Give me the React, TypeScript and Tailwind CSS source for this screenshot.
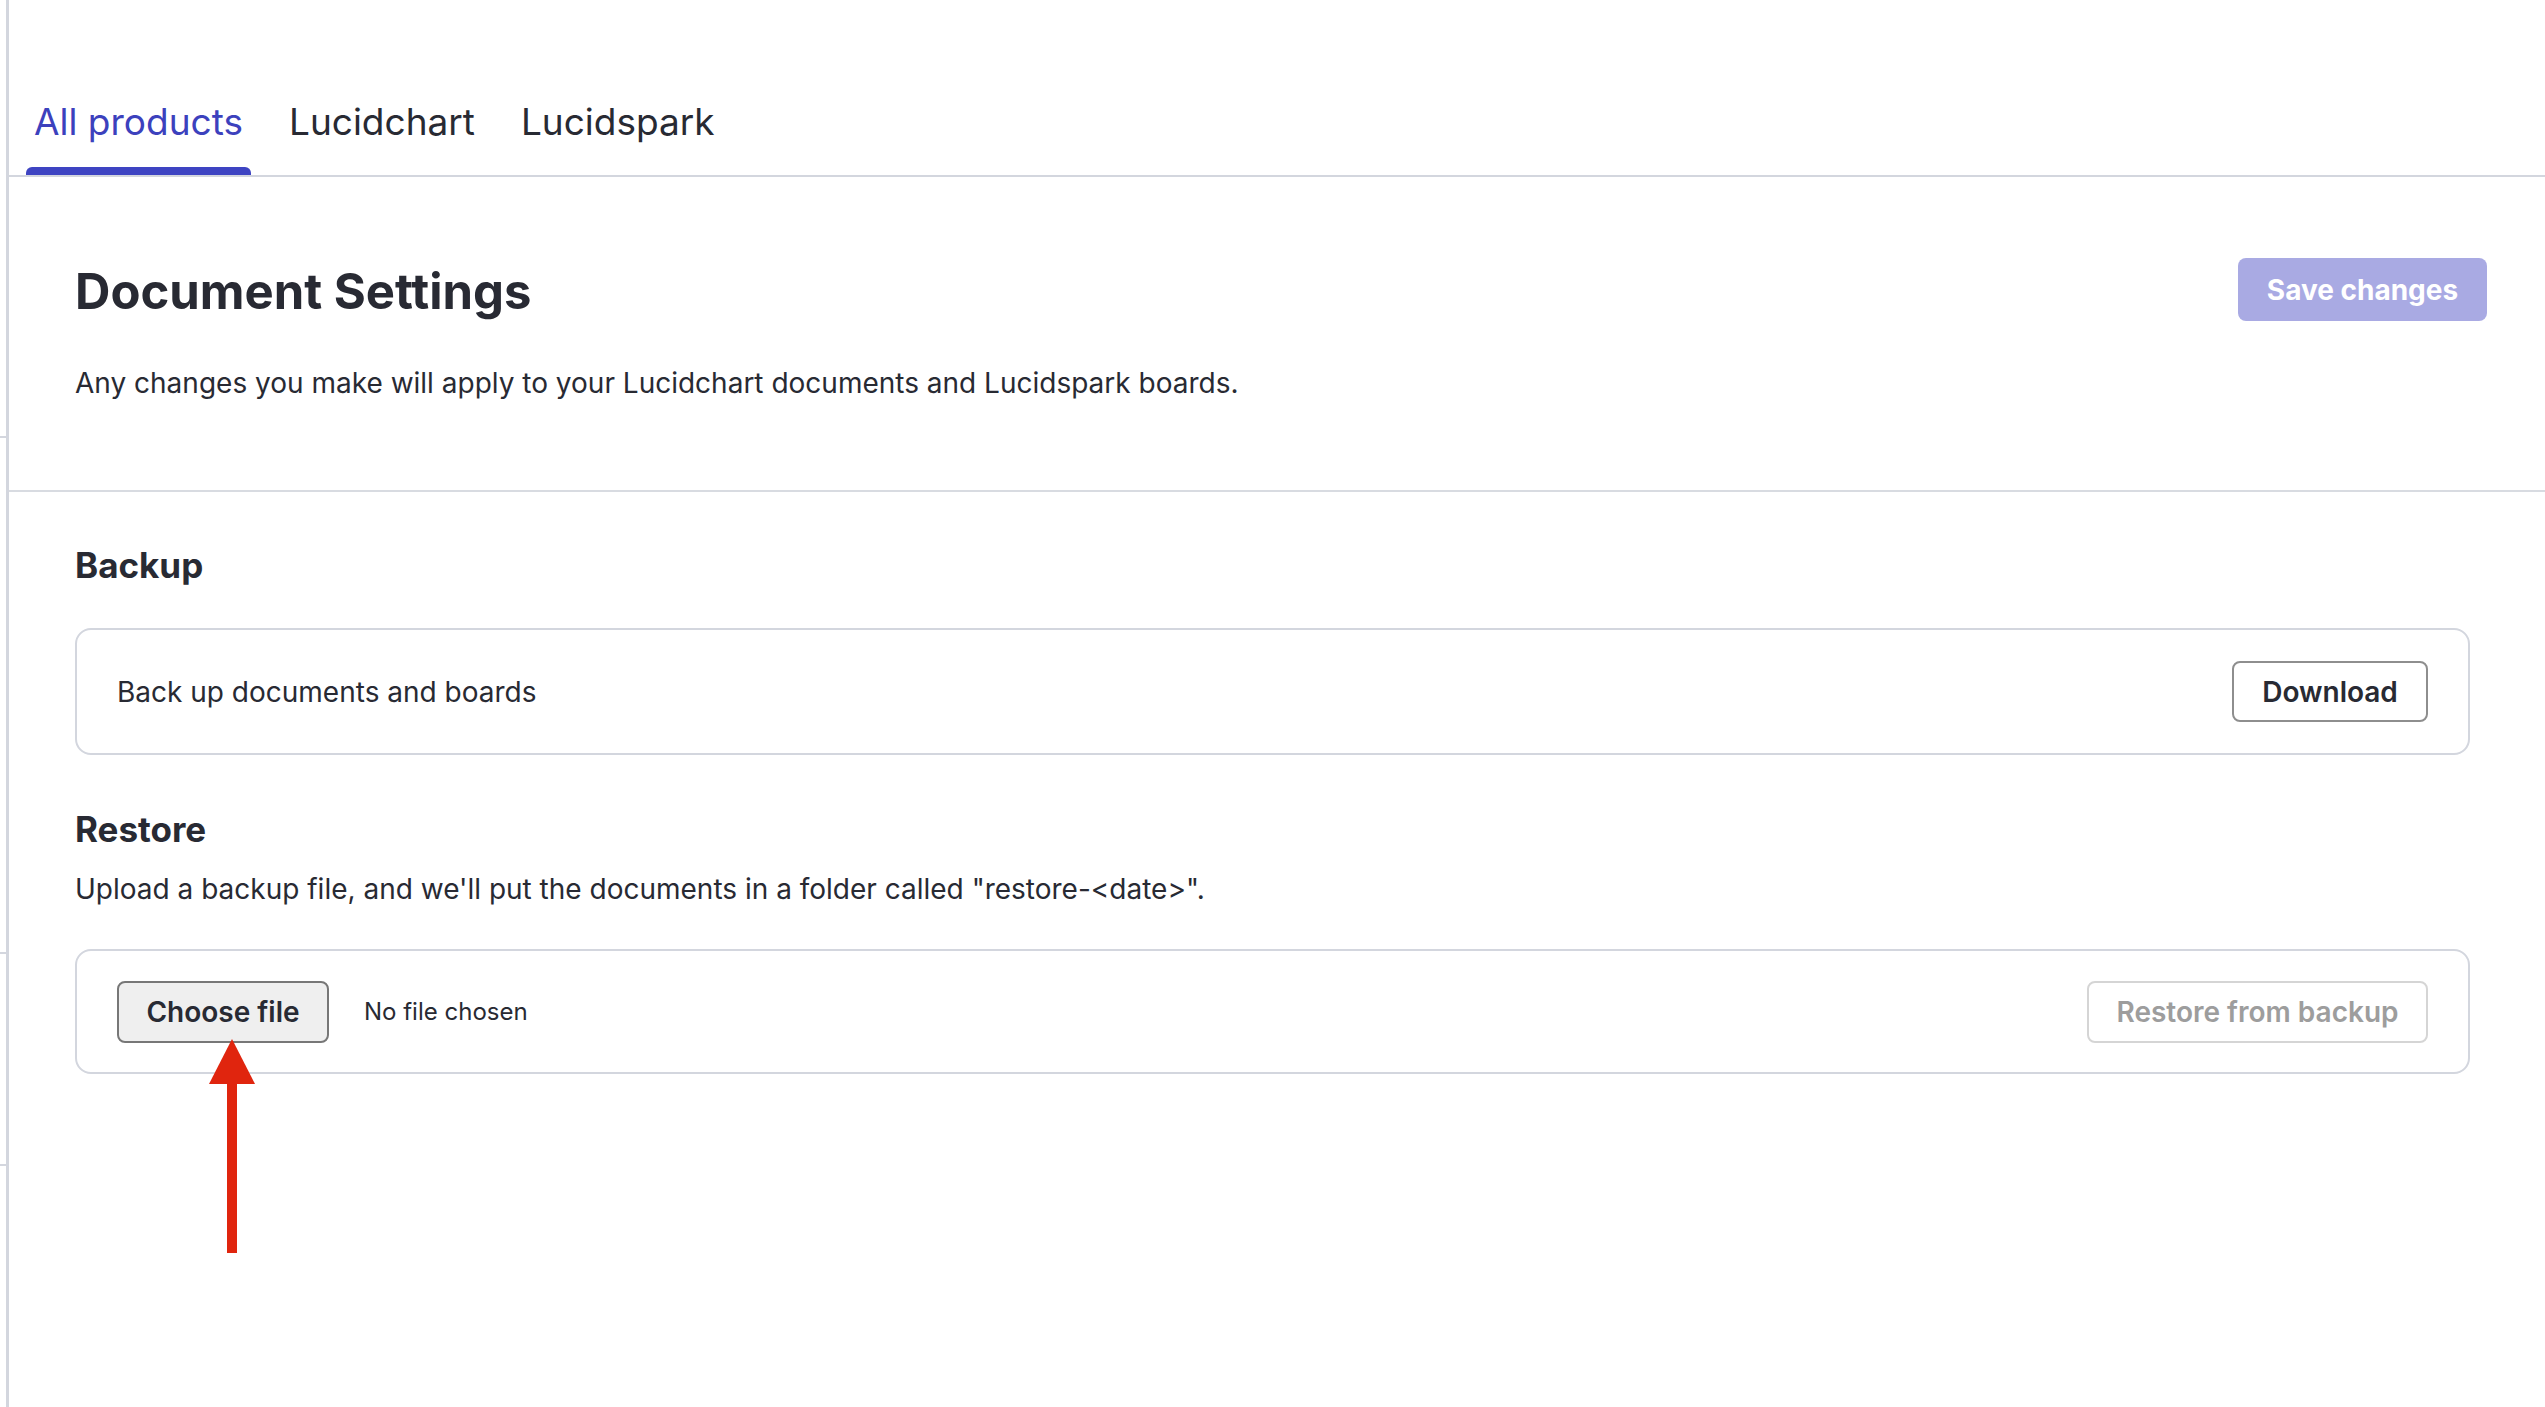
import React from "react";

const tabs = [
  { label: "All products", active: true },
  { label: "Lucidchart", active: false },
  { label: "Lucidspark", active: false },
];

export default function App() {
  return (
    <div className="relative flex min-h-[1407px] bg-white text-[#282a33] font-['Inter','Noto_Sans',sans-serif]">
      {/* leftover edge of the sidebar */}
      <div className="flex w-[9px] shrink-0 flex-col border-r-[3px] border-[#d3d6de]">
        <div className="h-[438px] border-b-2 border-[#d3d6de]" />
        <div className="h-[516px] border-b-2 border-[#d3d6de]" />
        <div className="h-[212px] border-b-2 border-[#d3d6de]" />
        <div className="flex-1" />
      </div>

      <main className="flex-1">
        {/* tabs */}
        <nav className="flex h-[177px] items-end gap-[30px] border-b-2 border-[#d3d6de] pl-[17px]">
          {tabs.map((tab) => (
            <div key={tab.label} className="flex flex-col items-stretch">
              <span
                className={`px-[8px] text-[37px] leading-[46px] ${
                  tab.active ? "text-[#3c41bd]" : "text-[#282a33]"
                }`}
              >
                {tab.label}
              </span>
              <div
                className={`mt-[22px] h-[8px] rounded-t-[6px] ${
                  tab.active ? "bg-[#3e44c2]" : "bg-transparent"
                }`}
              />
            </div>
          ))}
        </nav>

        {/* header */}
        <section className="border-b-2 border-[#d8dbe1] pb-[87px] pl-[66px] pr-[58px] pt-[81px]">
          <div className="flex items-start justify-between">
            <h1 className="mt-[4px] text-[49px] font-bold leading-[60px]">Document Settings</h1>
            <button className="h-[63px] w-[249px] rounded-[8px] bg-[#a9aae3] text-[28px] font-bold text-white">
              Save changes
            </button>
          </div>
          <p className="mt-[41px] text-[28px] leading-[40px]">
            Any changes you make will apply to your Lucidchart documents and Lucidspark boards.
          </p>
        </section>

        {/* body */}
        <section className="pl-[66px] pr-[75px] pt-[51px]">
          <h2 className="text-[35px] font-bold leading-[44px]">Backup</h2>
          <div className="mt-[41px] flex h-[127px] items-center justify-between rounded-[16px] border-2 border-[#d3d6de] px-[40px]">
            <span className="text-[28px] leading-[40px]">Back up documents and boards</span>
            <button className="h-[61px] w-[196px] rounded-[8px] border-2 border-[#8e8e8e] text-[28px] font-semibold">
              Download
            </button>
          </div>

          <h2 className="mt-[52px] text-[35px] font-bold leading-[44px]">Restore</h2>
          <p className="mt-[18px] text-[28px] leading-[40px]">
            Upload a backup file, and we'll put the documents in a folder called "restore-&lt;date&gt;".
          </p>
          <div className="mt-[40px] flex h-[125px] items-center justify-between rounded-[16px] border-2 border-[#d3d6de] px-[40px]">
            <div className="flex items-center gap-[35px]">
              <button className="h-[62px] w-[212px] rounded-[8px] border-2 border-[#777777] bg-[#efefef] text-[28px] font-semibold">
                Choose file
              </button>
              <span className="text-[24px] leading-[32px]">No file chosen</span>
            </div>
            <button className="h-[62px] w-[341px] rounded-[8px] border-2 border-[#d5d5d5] text-[28px] font-semibold text-[#9d9d9d]">
              Restore from backup
            </button>
          </div>
        </section>
      </main>

      {/* annotation arrow */}
      <svg
        className="absolute left-[208px] top-[1039px]"
        width="48"
        height="215"
        viewBox="0 0 48 215"
      >
        <polygon points="24,0 47,45 1,45" fill="#e0250e" />
        <rect x="19" y="44" width="10" height="170" fill="#e0250e" />
      </svg>
    </div>
  );
}
